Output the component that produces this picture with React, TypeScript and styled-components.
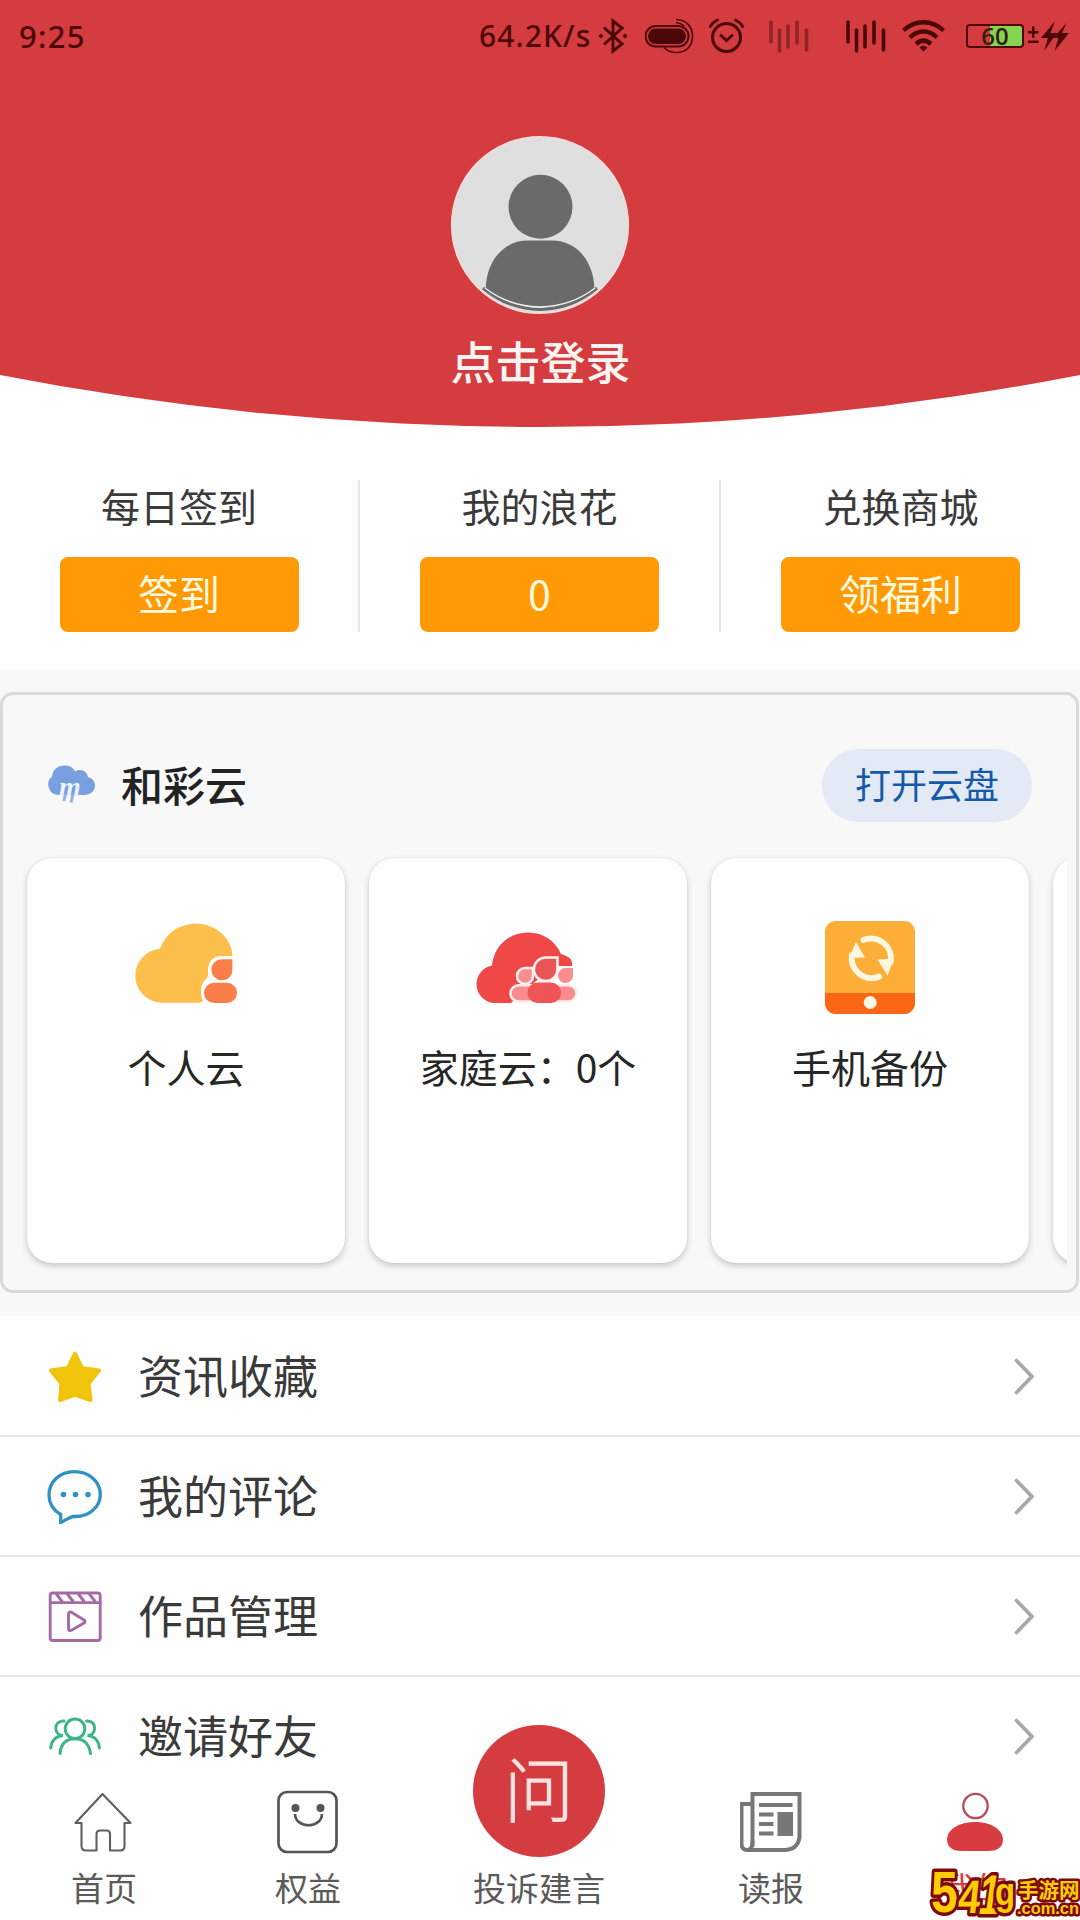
import React from "react";
import styled, { createGlobalStyle } from "styled-components";

const INK = "#4c0808";
const RED = "#d43c3f";

const GlobalStyle = createGlobalStyle`
  * { box-sizing: border-box; }
  body {
    margin: 0;
    background: #fff;
    font-family: "Noto Sans CJK SC", "Noto Sans", sans-serif;
    color: #3a3a3a;
  }
  svg { display: block; flex: none; }
`;

const Screen = styled.main`
  width: 1080px;
  height: 1920px;
  display: flex;
  flex-direction: column;
  overflow: hidden;
  background: #fefefe;
`;

/* Header */
const Header = styled.header`
  height: 427px;
  flex: none;
  background: ${RED};
  clip-path: circle(2830px at 540px -2403px);
  display: flex;
  flex-direction: column;
  align-items: center;
`;

const StatusBar = styled.div`
  width: 100%;
  height: 72px;
  padding: 0 10px 0 19px;
  display: flex;
  align-items: center;
  justify-content: space-between;
  color: ${INK};
  font-family: "Noto Sans", sans-serif;
  font-weight: 500;
`;

const Clock = styled.span`
  font-size: 31px;
  line-height: 72px;
  letter-spacing: 1.3px;
  font-weight: 500;
`;

const StatusRight = styled.div`
  display: flex;
  align-items: center;
`;

const Speed = styled.span`
  width: 119px;
  font-size: 30px;
  line-height: 72px;
  letter-spacing: 1.1px;
  white-space: nowrap;
`;

const StatusIcon = styled.svg<{ $gap: number }>`
  margin-right: ${(p) => p.$gap}px;
`;

const Battery = styled.span`
  width: 58px;
  height: 24px;
  margin-right: 4px;
  border: 2.5px solid ${INK};
  border-radius: 4px;
  background: linear-gradient(to right, transparent 40%, #86d452 40%);
  font: 600 24px/19px "Open Sans", "Noto Sans", sans-serif;
  text-align: center;
  color: #33200c;
`;

const Avatar = styled.svg`
  margin-top: 63px;
`;

const LoginText = styled.div`
  margin-top: 14px;
  padding-left: 1px;
  font-size: 45px;
  line-height: 64px;
  font-weight: 500;
  color: #fff4f2;
`;

/* Counters */
const Stats = styled.section`
  height: 242px;
  flex: none;
  padding-top: 53px;
  display: grid;
  grid-template-columns: 358px 361px 361px;
`;

const Stat = styled.div`
  height: 152px;
  display: flex;
  flex-direction: column;
  align-items: center;
  justify-content: space-between;
  & + & { border-left: 2px solid #e6e6e6; }
`;

const StatLabel = styled.div`
  font-size: 39px;
  line-height: 50px;
`;

const StatButton = styled.button`
  width: 239px;
  height: 75px;
  border: 0;
  border-radius: 8px;
  padding: 0 0 5px;
  background: #ff9a06;
  color: #fff9df;
  font: 400 41px/70px "Noto Sans CJK SC", sans-serif;
`;

/* Cloud panel */
const CloudSection = styled.section`
  height: 647px;
  flex: none;
  padding: 23px 1px 23px 0;
  background: #f8f8f9;
`;

const Panel = styled.div`
  height: 601px;
  border: 3px solid #dadadb;
  border-radius: 13px;
  padding: 54px 9px 0 10px;
`;

const PanelHead = styled.div`
  height: 73px;
  padding: 0 35px 0 34px;
  display: flex;
  align-items: center;
`;

const CloudLogo = styled.svg`
  margin-bottom: 3px;
`;

const PanelTitle = styled.h2`
  margin: 0 auto 0 26px;
  padding-bottom: 4px;
  font-size: 42px;
  line-height: 60px;
  font-weight: 500;
  color: #222;
`;

const OpenButton = styled.button`
  width: 210px;
  height: 73px;
  border: 0;
  border-radius: 37px;
  padding: 0 0 4px;
  background: #e3eaf5;
  color: #1659a8;
  font: 400 36px/69px "Noto Sans CJK SC", sans-serif;
`;

const CardStrip = styled.div`
  display: flex;
  gap: 24px;
  padding: 36px 0 24px 14px;
  overflow: hidden;
`;

const Card = styled.article`
  width: 318px;
  height: 405px;
  flex: none;
  padding-top: 57px;
  border-radius: 25px;
  background: #fefefe;
  box-shadow: 0 3px 6px rgba(0, 0, 0, 0.19), 0 0 2px rgba(0, 0, 0, 0.1);
  display: flex;
  flex-direction: column;
  align-items: center;
`;

const CardLabel = styled.div`
  margin-top: 26px;
  font-size: 39px;
  line-height: 50px;
  color: #262626;
  white-space: nowrap;
`;

/* Menu */
const Menu = styled.nav`
  flex: 1;
  min-height: 0;
  overflow: hidden;
  padding-top: 1px;
`;

const MenuRow = styled.a`
  height: 120px;
  padding: 0 45px 0 46px;
  display: flex;
  align-items: center;
  border-bottom: 2px solid #e5e5e7;
`;

const MenuLabel = styled.span`
  margin: 0 auto 0 36px;
  padding-bottom: 2px;
  font-size: 45px;
  line-height: 60px;
`;

/* Bottom tabs */
const TabBar = styled.footer`
  height: 140px;
  flex: none;
  background: #fefefe;
  display: grid;
  grid-template-columns: 208px 200px 262px 202px 206px;
`;

const Tab = styled.div<{ $active?: boolean }>`
  height: 140px;
  display: flex;
  flex-direction: column;
  align-items: center;
  justify-content: flex-end;
  color: ${(p) => (p.$active ? RED : "#5a5a5a")};
`;

const TabLabel = styled.span`
  margin-top: 10px;
  font-size: 33px;
  line-height: 46px;
  margin-bottom: 10px;
`;

const AskCircle = styled.div`
  width: 132px;
  height: 132px;
  flex: none;
  margin-bottom: -3px;
  border-radius: 50%;
  background: ${RED};
  color: #ffe3e0;
  font-size: 70px;
  line-height: 124px;
  font-weight: 300;
  -webkit-text-stroke: 0.9px #ffe3e0;
  text-align: center;
`;

const Watermark = styled.svg`
  position: absolute;
  left: 926px;
  top: 1862px;
`;

const Chevron = () => (
  <svg width="22" height="40" viewBox="0 0 22 40" fill="none" stroke="#a8a8a8" strokeWidth="3.8" strokeLinecap="round" strokeLinejoin="round">
    <path d="M3.5 4.5 L19 20.5 L3.5 36.5" />
  </svg>
);

const Bars = ({ color, gap }: { color: string; gap: number }) => (
  <StatusIcon $gap={gap} width="40" height="34" viewBox="0 0 40 34" stroke={color} strokeWidth="3.6" strokeLinecap="round">
    <path d="M2 3 V23 M10.5 11 V32 M19 7 V28 M28 3 V24 M37.5 11 V31" />
  </StatusIcon>
);

const PersonalCloud = () => (
  <svg width="130" height="100" viewBox="0 0 130 100">
    <path d="M41 87.7 A27 27 0 0 1 39 33.8 C45 18 58 8.7 75.3 8.7 C96 8.7 111.4 25 111.4 41 L101 41 C91 41 87 48 87 55 V60 C87 63 83 65 81 70 C79.5 76 80 82 82 86 L79 87.7 Z" fill="#fcbf4c" />
    <path d="M111.4 44.3 V54.5 A10.5 10.5 0 1 1 101 44.3 Z" fill="#f97e4a" />
    <rect x="83" y="67.7" width="33" height="20.3" rx="10" fill="#f97e4a" />
  </svg>
);

const FamilyCloud = () => (
  <svg width="130" height="100" viewBox="0 0 130 100">
    <path d="M30 88 A19 19 0 0 1 29 50.5 C31 31 46 17.5 65 17.5 C81 17.5 92 26 98 39 C104 41 109 43 109 48 V51 H96 L80 60 L48 88 Z" fill="#ef4847" />
    <path d="M70 53 V61 A8 8 0 1 1 62 53 Z" fill="#f98d8e" stroke="#fff0ee" strokeWidth="2.6" />
    <path d="M110 53 V61 A7.5 7.5 0 1 1 102.5 53 Z" fill="#f98d8e" />
    <rect x="47.5" y="70.3" width="66" height="16.2" rx="8" fill="#fb8b8d" stroke="#fff0ee" strokeWidth="2.6" />
    <path d="M94.5 42.5 V54 A11.8 11.8 0 1 1 83 42.5 Z" fill="#e95456" stroke="#fff0ee" strokeWidth="2.6" />
    <rect x="64.5" y="67.5" width="33.5" height="20.5" rx="10" fill="#ef5557" />
  </svg>
);

const PhoneBackup = () => (
  <svg width="130" height="100" viewBox="0 0 130 100">
    <rect x="20" y="6" width="90" height="93" rx="11" fill="#fdae38" />
    <path d="M20 78 H110 V88 A11 11 0 0 1 99 99 H31 A11 11 0 0 1 20 88 Z" fill="#fc6715" />
    <circle cx="65.2" cy="87.5" r="6.5" fill="#fff6e8" />
    <g fill="none" stroke="#fff7df" strokeWidth="6" strokeLinecap="round">
      <path d="M58.5 25 A20 20 0 0 1 85.7 47" />
      <path d="M74 61.6 A20 20 0 0 1 46.9 40" />
    </g>
    <path d="M72.5 44.5 L89 43.5 L82.5 60.5 Z M51 27 L60 42.5 L44 43 Z" fill="#fff7df" />
  </svg>
);

const menu = [
  {
    label: "资讯收藏",
    icon: (
      <svg width="56" height="56" viewBox="0 0 56 56">
        <path d="M29 5.5 L36 20 L53 22.5 L42.5 35.5 L44.5 52 L29 46.5 L14 52 L15.5 35.5 L5 22.5 L22 20 Z" fill="#f1c40c" stroke="#f1c40c" strokeWidth="4" strokeLinejoin="round" />
      </svg>
    ),
  },
  {
    label: "我的评论",
    icon: (
      <svg width="56" height="56" viewBox="0 0 56 56">
        <path d="M14.7 46.5 C7 42 3 35 3 27 C3 13.5 14 3.6 28.5 3.6 C43 3.6 54.3 13.5 54.3 26.5 C54.3 39.5 42 49.5 27.5 48.4 C23 49.5 19 52.5 14.7 54.5 Z" fill="none" stroke="#3092c4" strokeWidth="3.3" />
        <g fill="#3092c4"><circle cx="17.5" cy="26.5" r="2.8" /><circle cx="29.5" cy="26.5" r="2.8" /><circle cx="42" cy="26.5" r="2.8" /></g>
      </svg>
    ),
  },
  {
    label: "作品管理",
    icon: (
      <svg width="56" height="56" viewBox="0 0 56 56" fill="none" stroke="#a56aa4" strokeWidth="2.9" strokeLinejoin="round">
        <rect x="4.2" y="5" width="50" height="47.5" rx="2.5" />
        <path d="M4.4 14.6 H54 M10 5.5 L16.5 14 M21 5.5 L27.5 14 M32 5.5 L38.5 14 M43 5.5 L49.5 14" />
        <path d="M22.5 26.5 Q22.5 23 26 24.5 L38 32 Q40 33.5 38 35 L26 42 Q22.5 43.5 22.5 40.5 Z" />
      </svg>
    ),
  },
  {
    label: "邀请好友",
    icon: (
      <svg width="56" height="56" viewBox="0 0 56 56" fill="none" stroke="#3db489" strokeWidth="3" strokeLinecap="round">
        <circle cx="29" cy="20.8" r="9.8" />
        <path d="M14 45.5 C15 35 21 30.8 29 30.8 C37 30.8 43 35 44.5 45.5" />
        <path d="M18 13 C12.5 12.5 9.5 16.5 9.8 20.5 C10 24.5 13 27.3 17 27.5 C10 28 5 33 4.8 40" />
        <path d="M40.5 13 C46 12.5 48.8 16.5 48.6 20.5 C48.4 24.5 45.5 27.3 41.5 27.5 C48.5 28 52.8 33 53.4 40" />
      </svg>
    ),
  },
];

export default function App() {
  return (
    <Screen>
      <GlobalStyle />
      <Header>
        <StatusBar>
          <Clock>9:25</Clock>
          <StatusRight>
            <Speed>64.2K/s</Speed>
            <StatusIcon $gap={15} width="32" height="36" viewBox="0 0 32 36" fill="none" stroke={INK} strokeWidth="3">
              <path d="M6 9.5 L24 26 L15 33 V3 L24 10 L6 26.5" />
              <path d="M0.5 18 L3 15.5 L5.5 18 L3 20.5 Z M24.5 18 L27 15.5 L29.5 18 L27 20.5 Z" fill={INK} stroke="none" />
            </StatusIcon>
            <StatusIcon $gap={14} width="50" height="36" viewBox="1 0 50 36" fill="none" stroke={INK} strokeWidth="2">
              <rect x="1.5" y="8" width="43" height="20.5" rx="10.2" />
              <rect x="5" y="11.5" width="36" height="13.5" rx="6.7" fill={INK} />
              <path d="M32 1.5 C43 2 48.5 9 48.5 18 C48.5 28 42 34.5 33 34.5 C27 34.5 22.5 32.5 20 29.5 M32 4.5 C36 5 38 6 40 8" strokeWidth="1.7" />
            </StatusIcon>
            <StatusIcon $gap={24} width="36" height="36" viewBox="0.5 0.5 36 36" fill="none" stroke={INK} strokeWidth="3" strokeLinecap="round">
              <circle cx="18" cy="20" r="14" />
              <path d="M12.5 18 L18 23 L23.5 18 M1.8 9 Q4.5 4.5 9 2.5 M34.2 9 Q31.5 4.5 27 2.5" />
            </StatusIcon>
            <Bars color="#912427" gap={37} />
            <Bars color={INK} gap={16} />
            <StatusIcon $gap={21} width="43" height="34" viewBox="0 0 43 34" fill="none" stroke={INK} strokeWidth="4.4">
              <path d="M1.5 11.5 C13 0.5 30 0.5 41.5 11.5 M8 18.5 C16 10.5 27 10.5 35 18.5 M14 25 C19 20.5 24 20.5 29 25" />
              <path d="M17.5 28.5 Q21.5 25 25.5 28.5 L21.5 32.5 Z" fill={INK} stroke="none" />
            </StatusIcon>
            <Battery>60</Battery>
            <svg width="42" height="34" viewBox="0 0 42 34" fill={INK}>
              <path d="M0 12 H4 V7.5 H6.5 V12 H10.5 V14.5 H6.5 V19 H4 V14.5 H0 Z M0 21.5 H10.5 V24 H0 Z" />
              <path d="M27 2 L13 19 H20 L16 32 L29 14 H22.5 Z M38.5 4 L25 19 H30.5 L26.5 32 L41 14 H34 Z" />
            </svg>
          </StatusRight>
        </StatusBar>
        <Avatar width="180" height="180" viewBox="0 0 180 180">
          <circle cx="90" cy="90" r="88.3" fill="#dfdfdf" stroke="#f6dcd9" strokeWidth="1.6" />
          <circle cx="90.5" cy="71.8" r="32" fill="#6a6a6a" />
          <path d="M35.8 154 C36 128 52 105.5 78 105.5 H102 C128 105.5 144 128 144.3 154 Q90 190 35.8 154 Z" fill="#6a6a6a" />
          <path d="M33 153 Q57 173.5 90 174.5 Q123 173.5 147 153" fill="none" stroke="#6a6a6a" strokeWidth="3" />
          <path d="M35 153 Q58 171 90 172 Q122 171 145 153" fill="none" stroke="#eee" strokeWidth="1.3" />
        </Avatar>
        <LoginText>点击登录</LoginText>
      </Header>

      <Stats>
        <Stat><StatLabel>每日签到</StatLabel><StatButton>签到</StatButton></Stat>
        <Stat><StatLabel>我的浪花</StatLabel><StatButton>0</StatButton></Stat>
        <Stat><StatLabel>兑换商城</StatLabel><StatButton>领福利</StatButton></Stat>
      </Stats>

      <CloudSection>
        <Panel>
          <PanelHead>
            <CloudLogo width="48" height="40" viewBox="0 0 48 40">
              <path d="M11 31 A10.5 10.5 0 0 1 5 12.5 C6 5 11 1.5 17.5 1.5 C23 1.5 26 3.5 28 7.5 C34 4 40 7 41 13 C46 14.5 48 18 48 21.5 C48 27 43.5 31 37 31 Z" fill="#789fe0" />
              <text x="12" y="31.5" fontSize="28" fontStyle="italic" fontWeight="700" fontFamily="Liberation Serif, serif" fill="#eef4ff">m</text>
              <path d="M18.5 30 L16.8 37 M26 30 L24 38.5" stroke="#91b2e6" strokeWidth="3" />
            </CloudLogo>
            <PanelTitle>和彩云</PanelTitle>
            <OpenButton>打开云盘</OpenButton>
          </PanelHead>
          <CardStrip>
            <Card><PersonalCloud /><CardLabel>个人云</CardLabel></Card>
            <Card><FamilyCloud /><CardLabel>家庭云：0个</CardLabel></Card>
            <Card><PhoneBackup /><CardLabel>手机备份</CardLabel></Card>
            <Card />
          </CardStrip>
        </Panel>
      </CloudSection>

      <Menu>
        {menu.map((m) => (
          <MenuRow key={m.label}>
            {m.icon}
            <MenuLabel>{m.label}</MenuLabel>
            <Chevron />
          </MenuRow>
        ))}
      </Menu>

      <TabBar>
        <Tab>
          <svg width="60" height="62" viewBox="0 0 60 62" fill="none" stroke="#5f5f5f" strokeWidth="2.1" strokeLinejoin="round">
            <path d="M28.5 2 L1.5 31 H7.5 V54 Q7.5 58.5 12 58.5 H22.5 V42 Q22.5 38.5 26 38.5 H32.5 Q36 38.5 36 42 V58.5 H46 Q50.5 58.5 50.5 54 V31 H56.5 Z" />
          </svg>
          <TabLabel>首页</TabLabel>
        </Tab>
        <Tab>
          <svg width="62" height="66" viewBox="0 0 62 66" fill="none" stroke="#555" strokeWidth="2.7">
            <rect x="1.5" y="4" width="58" height="60" rx="8.5" />
            <path d="M18 26 C18.5 41 44.5 41 45 26" />
            <g fill="#555" stroke="none"><circle cx="18.5" cy="20" r="4" /><circle cx="43.5" cy="20" r="4" /></g>
          </svg>
          <TabLabel>权益</TabLabel>
        </Tab>
        <Tab>
          <AskCircle>问</AskCircle>
          <TabLabel>投诉建言</TabLabel>
        </Tab>
        <Tab>
          <svg width="62" height="62" viewBox="0.5 0.5 62 62" fill="none" stroke="#777" strokeWidth="4">
            <path d="M13 55 V2.5 H60 V46 Q58 58 46 58.5 H8 Q2 58.5 2 52 V12.5 H13" />
            <path d="M13 50 Q13 58 8 58.5 M19.5 13.5 H53 M19.5 23 H34 M19.5 32.5 H34 M19.5 42 H34" />
            <rect x="38" y="20.5" width="15.5" height="24" fill="#777" stroke="none" />
          </svg>
          <TabLabel>读报</TabLabel>
        </Tab>
        <Tab $active>
          <svg width="58" height="62" viewBox="0 0 58 62">
            <circle cx="29.5" cy="14" r="12.2" fill="none" stroke="#b84a55" strokeWidth="2.3" />
            <path d="M1 47 C2 36 15 30 29 30 C43 30 56 36 57 47 C57 56.5 50 59 42 59 H16 C8 59 1 56.5 1 47 Z" fill="#d93d41" />
          </svg>
          <TabLabel>我的</TabLabel>
        </Tab>
      </TabBar>

      <Watermark width="154" height="58" viewBox="0 0 154 58" fill="#ffcd05" stroke="#7c0b08" paintOrder="stroke" strokeLinejoin="round" fontFamily="Liberation Sans, sans-serif" fontWeight="700">
        <g strokeWidth="7">
          <text x="5" y="50" fontSize="58" textLength="27" lengthAdjust="spacingAndGlyphs">5</text>
          <text transform="translate(31 51) skewX(-6)" fontSize="47" textLength="22" lengthAdjust="spacingAndGlyphs">4</text>
          <text transform="translate(51 52) skewX(-8)" fontSize="56" textLength="21" lengthAdjust="spacingAndGlyphs">1</text>
          <text x="69" y="43" fontSize="38" textLength="20" lengthAdjust="spacingAndGlyphs">g</text>
        </g>
        <text x="92" y="36" fontSize="20.5" strokeWidth="5" fontFamily="Noto Sans CJK SC, sans-serif">手游网</text>
        <text x="91" y="52" fontSize="17" strokeWidth="5" textLength="62" lengthAdjust="spacingAndGlyphs">.com.cn</text>
      </Watermark>
    </Screen>
  );
}
